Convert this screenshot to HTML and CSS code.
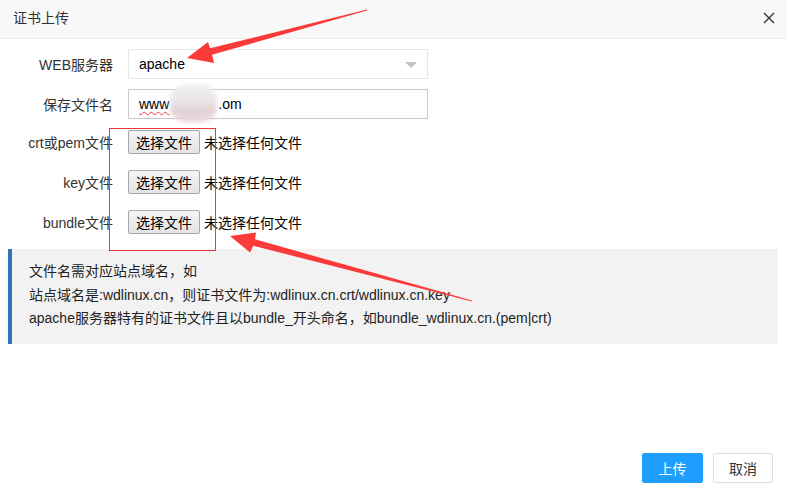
FILE: index.html
```html
<!DOCTYPE html>
<html lang="zh-CN">
<head>
    <meta charset="UTF-8">
    <meta name="viewport" content="width=device-width, initial-scale=1.0">
    <title>证书上传</title>
    <link rel="stylesheet" href="styles.css">
</head>
<body>
    <div class="dialog">
        <div class="dialog-title">
            证书上传
            <span class="close">
                <svg width="12" height="12" viewBox="0 0 12 12"><path d="M1 1L11 11M11 1L1 11" stroke="#333" stroke-width="1.4" fill="none"/></svg>
            </span>
        </div>
        <div class="dialog-body">
            <div class="form-row">
                <label>WEB服务器</label>
                <div class="select">apache<i class="caret"></i></div>
            </div>
            <div class="form-row">
                <label>保存文件名</label>
                <div class="input"><span class="typo">www</span><span class="gap"></span>.om<span class="blur"></span></div>
            </div>
            <div class="form-row file-row first">
                <label>crt或pem文件</label>
                <button class="file-btn">选择文件</button>
                <span class="file-name">未选择任何文件</span>
            </div>
            <div class="form-row file-row">
                <label>key文件</label>
                <button class="file-btn">选择文件</button>
                <span class="file-name">未选择任何文件</span>
            </div>
            <div class="form-row file-row">
                <label>bundle文件</label>
                <button class="file-btn">选择文件</button>
                <span class="file-name">未选择任何文件</span>
            </div>
            <div class="tips">
                <p>文件名需对应站点域名，如</p>
                <p>站点域名是:wdlinux.cn，则证书文件为:wdlinux.cn.crt/wdlinux.cn.key</p>
                <p>apache服务器特有的证书文件且以bundle_开头命名，如bundle_wdlinux.cn.(pem|crt)</p>
            </div>
        </div>
        <div class="dialog-footer">
            <button class="btn btn-primary">上传</button>
            <button class="btn">取消</button>
        </div>

        <!-- 标注 -->
        <div class="mark-box"></div>
        <svg class="marks" width="787" height="495" viewBox="0 0 787 495">
            <polygon fill="#fb3a3a" points="187,58 208,42 210,48.3 367,9.6 367,10.4 212,54.8 214,63"/>
            <polygon fill="#fb3a3a" points="230,236 256,232.5 255,239.3 472,300.6 472,301.4 253.3,245.8 250,252.5"/>
        </svg>
    </div>
</body>
</html>
```

FILE: styles.css
```css
body {
    margin: 0;
    font-family: "Liberation Sans", Arial, "Noto Sans CJK SC", sans-serif;
    font-size: 14px;
    color: #333;
    background: #fff;
}
.dialog {
    position: relative;
    width: 787px;
    height: 495px;
    display: flex;
    flex-direction: column;
    overflow: hidden;
}
.dialog-title {
    position: relative;
    height: 38px;
    line-height: 36px;
    padding-left: 13px;
    background-color: #f8f8f8;
    border-bottom: 1px solid #eee;
    color: #333;
}
.close {
    position: absolute;
    right: 12px;
    top: 12px;
    width: 12px;
    height: 12px;
    line-height: 0;
}
.dialog-body {
    padding: 10px 9px 0 8px;
}
.form-row {
    display: flex;
    align-items: center;
    height: 30px;
    margin-bottom: 10px;
}
.form-row label {
    width: 105px;
    padding-right: 15px;
    text-align: right;
    flex-shrink: 0;
}
.select, .input {
    position: relative;
    box-sizing: border-box;
    width: 300px;
    height: 30px;
    line-height: 28px;
    padding-left: 10px;
    border: 1px solid #e6e6e6;
    background: #fff;
    color: #000;
}
.input {
    border-color: #c9c9c9;
}
.caret {
    position: absolute;
    right: 10px;
    top: 12px;
    width: 0;
    height: 0;
    border-top: 6px solid #c2c2c2;
    border-left: 6px solid transparent;
    border-right: 6px solid transparent;
}
.typo {
    text-decoration: underline wavy #e53935;
    text-decoration-thickness: 1px;
    text-underline-offset: 2px;
}
.gap {
    display: inline-block;
    width: 49px;
}
.blur {
    position: absolute;
    left: 41px;
    top: -5px;
    width: 47px;
    height: 37px;
    border-radius: 15px;
    background: linear-gradient(180deg, #ececee 0%, #ebe6e8 45%, #e3d2d6 70%, #ead8dc 100%);
    filter: blur(2px);
}
.file-row {
    margin-bottom: 10px;
}
.file-row.first {
    margin-top: -2px;
}
.file-btn {
    width: 72px;
    height: 24px;
    padding: 0;
    font-family: inherit;
    font-size: 14px;
    color: #000;
    background: linear-gradient(#f5f5f5, #e3e3e3);
    border: 1px solid #a8a8a8;
    border-radius: 2px;
}
.file-name {
    margin-left: 4px;
    color: #000;
}
.tips {
    margin-top: 12px;
    height: 95px;
    box-sizing: border-box;
    padding: 11px 0 0 17px;
    background-color: #f2f2f2;
    border-left: 4px solid #2f76b9;
    color: #222;
}
.tips p {
    margin: 0;
    line-height: 23.5px;
}
.dialog-footer {
    margin-top: auto;
    display: flex;
    justify-content: flex-end;
    gap: 10px;
    padding: 0 14px 12px 0;
}
.btn {
    height: 30px;
    width: 60px;
    padding: 0;
    font-family: inherit;
    font-size: 14px;
    color: #333;
    background: #fff;
    border: 1px solid #dedede;
    border-radius: 2px;
}
.btn-primary {
    width: 61px;
    color: #fff;
    background-color: #1e9fff;
    border-color: #1e9fff;
}
.mark-box {
    position: absolute;
    left: 109px;
    top: 128px;
    width: 105px;
    height: 121px;
    border: 1px solid #e8383d;
    pointer-events: none;
}
.marks {
    position: absolute;
    left: 0;
    top: 0;
    pointer-events: none;
}
```
